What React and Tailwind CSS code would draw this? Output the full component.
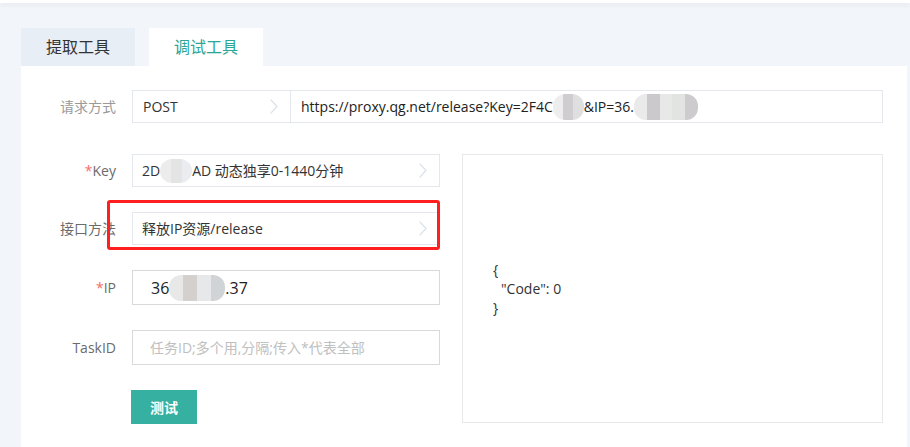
import React from 'react';

// ── mosaic blur used to hide private values ────────────────────────────────
function Blur({ w, h = 24, cells }) {
  return (
    <span
      className="inline-flex shrink-0 align-middle overflow-hidden rounded-[12px] opacity-90 blur-[0.6px]"
      style={{ width: w, height: h }}
    >
      {cells.map((c, i) => (
        <span key={i} className="flex-1 h-full" style={{ background: c }} />
      ))}
    </span>
  );
}

function Chevron() {
  return (
    <svg width="8" height="15" viewBox="0 0 8 15" fill="none" className="shrink-0">
      <path d="M1 1 L7 7.5 L1 14" stroke="#dde2ea" strokeWidth="1.2" strokeLinecap="round" strokeLinejoin="round" />
    </svg>
  );
}

function Label({ children, required, light }) {
  return (
    <div className={`w-[95px] shrink-0 text-right text-[14px] ${light ? 'text-[#9a9a9a]' : 'text-[#6b6b6b]'}`}>
      {required && <span className="text-[#f56c6c]">*</span>}
      {children}
    </div>
  );
}

function SelectBox({ children }) {
  return (
    <div className="w-[308px] h-[33px] border border-[#e4e7ed] flex items-center pl-[9px] pr-[12px] text-[14px] text-[#333]">
      <div className="flex-1 flex items-center whitespace-nowrap">{children}</div>
      <Chevron />
    </div>
  );
}

export default function App() {
  return (
    <div className="w-[910px] h-[447px] overflow-hidden bg-[#f2f5f9] font-['Open_Sans','Noto_Sans_CJK_SC',sans-serif]">
      {/* top bar */}
      <div className="h-[3px] bg-white shadow-[0_2px_5px_rgba(0,0,0,0.07)]" />

      {/* Tabs */}
      <div className="flex gap-[14px] pl-[21px] pt-[25px]">
        <div className="w-[114px] h-[38px] flex items-center justify-center bg-[#e8eef6] text-[16px] text-[#333]">
          提取工具
        </div>
        <div className="w-[114px] h-[38px] flex items-center justify-center bg-white text-[16px] text-[#2aa596]">
          调试工具
        </div>
      </div>

      {/* Panel */}
      <div className="ml-[21px] mr-[3px] h-[400px] bg-white pt-[24px] pr-[24px]">
        {/* 请求方式 */}
        <div className="flex items-center gap-[16px]">
          <Label light>请求方式</Label>
          <div className="flex-1 h-[33px] border border-[#e4e7ed] flex text-[14px]">
            <div className="w-[158px] flex items-center pl-[10px] pr-[12px] border-r border-[#e4e7ed] text-[#333]">
              <span className="flex-1">POST</span>
              <Chevron />
            </div>
            <div className="flex-1 flex items-center pl-[10px] text-[#222] whitespace-nowrap">
              https://proxy.qg.net/release?Key=2F4C
              <Blur w={31} h={26} cells={['#ececec', '#cbc8cc', '#dcdcdc']} />
              &amp;IP=36.
              <Blur w={64} h={26} cells={['#e8e8e8', '#c6c4c6', '#e6e6e6', '#dfe2df', '#c9c6c9']} />
            </div>
          </div>
        </div>

        <div className="flex mt-[31px]">
          {/* form column */}
          <div className="relative w-[419px] shrink-0 flex flex-col gap-[25px]">
            <div className="flex items-center gap-[16px]">
              <Label required>Key</Label>
              <SelectBox>
                2D
                <Blur w={32} h={24} cells={['#ebebeb', '#e2e2e2', '#e8ebee']} />
                AD 动态独享0-1440分钟
              </SelectBox>
            </div>

            <div className="flex items-center gap-[16px]">
              <Label>接口方法</Label>
              <SelectBox>释放IP资源/release</SelectBox>
            </div>

            <div className="flex items-center gap-[16px]">
              <Label required>IP</Label>
              <div className="w-[308px] h-[35px] border border-[#d9d9d9] flex items-center pl-[18px] text-[16px] text-[#222] whitespace-nowrap">
                36
                <Blur w={56} h={26} cells={['#e6e6e6', '#cfccc9', '#e4e6e8', '#cdd0d2']} />
                .37
              </div>
            </div>

            <div className="flex items-center gap-[16px]">
              <Label>TaskID</Label>
              <div className="w-[308px] h-[35px] border border-[#d9d9d9] flex items-center pl-[17px] text-[14px] text-[#c0c0c0] whitespace-nowrap">
                任务ID;多个用,分隔;传入*代表全部
              </div>
            </div>

            <div className="flex items-center gap-[16px]">
              <div className="w-[95px] shrink-0" />
              <button className="w-[66px] h-[34px] -ml-px bg-[#35b0a1] text-white text-[14px] font-bold">
                测试
              </button>
            </div>

            {/* red highlight annotation */}
            <div className="absolute left-[86px] top-[46px] w-[333px] h-[50px] border-[3px] border-[#ff1f1f] rounded-[3px] pointer-events-none" />
          </div>

          {/* response */}
          <div className="ml-[22px] flex-1 h-[269px] border border-[#e8e8e8] flex flex-col justify-center pl-[30px] text-[14px] leading-[19px] text-[#333]">
            <div>{'{'}</div>
            <div className="pl-[8px]">"Code": 0</div>
            <div>{'}'}</div>
          </div>
        </div>
      </div>
    </div>
  );
}
